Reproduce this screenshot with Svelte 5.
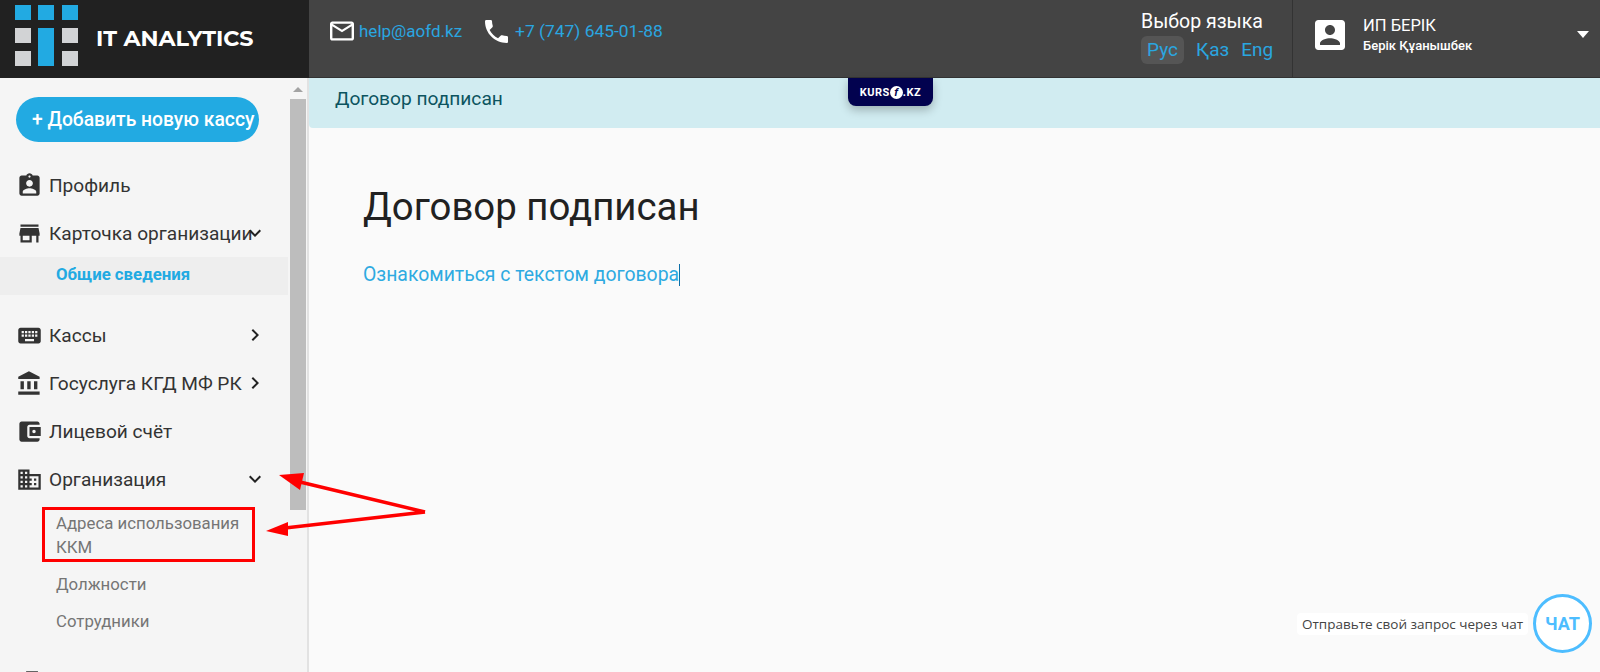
<script lang="ts">
    const icons = {
        profile: 'M19 3h-4.18C14.4 1.84 13.3 1 12 1c-1.3 0-2.4.84-2.82 2H5c-1.1 0-2 .9-2 2v14c0 1.1.9 2 2 2h14c1.1 0 2-.9 2-2V5c0-1.1-.9-2-2-2zm-7 0c.55 0 1 .45 1 1s-.45 1-1 1-1-.45-1-1 .45-1 1-1zm0 4c1.66 0 3 1.34 3 3s-1.34 3-3 3-3-1.34-3-3 1.34-3 3-3zm6 12H6v-1.4c0-2 4-3.1 6-3.1s6 1.1 6 3.1V19z',
        store: 'M20 4H4v2h16V4zm1 10v-2l-1-5H4l-1 5v2h1v6h10v-6h4v6h2v-6h1zm-9 4H6v-4h6v4z',
        keyboard: 'M20 5H4c-1.1 0-1.99.9-1.99 2L2 17c0 1.1.9 2 2 2h16c1.1 0 2-.9 2-2V7c0-1.1-.9-2-2-2zm-9 3h2v2h-2V8zm0 3h2v2h-2v-2zM8 8h2v2H8V8zm0 3h2v2H8v-2zm-1 2H5v-2h2v2zm0-3H5V8h2v2zm9 7H8v-2h8v2zm0-4h-2v-2h2v2zm0-3h-2V8h2v2zm3 3h-2v-2h2v2zm0-3h-2V8h2v2z',
        bank: 'M4 10v7h3v-7H4zm6 0v7h3v-7h-3zM2 22h19v-3H2v3zm14-12v7h3v-7h-3zm-4.5-9L2 6v2h19V6l-9.5-5z',
        wallet: 'M21 18v1c0 1.1-.9 2-2 2H5c-1.11 0-2-.9-2-2V5c0-1.1.89-2 2-2h14c1.1 0 2 .9 2 2v1h-9c-1.11 0-2 .9-2 2v8c0 1.1.89 2 2 2h9zm-9-2h10V8H12v8zm4-2.5c-.83 0-1.5-.67-1.5-1.5s.67-1.5 1.5-1.5 1.5.67 1.5 1.5-.67 1.5-1.5 1.5z',
        business: 'M12 7V3H2v18h20V7H12zM6 19H4v-2h2v2zm0-4H4v-2h2v2zm0-4H4V9h2v2zm0-4H4V5h2v2zm4 12H8v-2h2v2zm0-4H8v-2h2v2zm0-4H8V9h2v2zm0-4H8V5h2v2zm10 12h-8v-2h2v-2h-2v-2h2v-2h-2V9h8v10zm-2-8h-2v2h2v-2zm0 4h-2v2h2v-2z',
        doc: 'M9 2h10.5v20H9z'
    };
    const chevronRight = 'M10 6L8.59 7.41 13.17 12l-4.58 4.59L10 18l6-6z';
    const chevronDown = 'M16.59 8.59L12 13.17 7.41 8.59 6 10l6 6 6-6z';

    const nav = [
        { label: 'Профиль', icon: icons.profile },
        {
            label: 'Карточка организации',
            icon: icons.store,
            open: true,
            active: true,
            children: ['Общие сведения']
        },
        { label: 'Кассы', icon: icons.keyboard, arrow: true },
        { label: 'Госуслуга КГД МФ РК', icon: icons.bank, arrow: true },
        { label: 'Лицевой счёт', icon: icons.wallet },
        {
            label: 'Организация',
            icon: icons.business,
            open: true,
            children: ['Адреса использования ККМ', 'Должности', 'Сотрудники']
        },
        { label: '', icon: icons.doc }
    ];

    const squares = [
        [0, 0, '#22aae2'], [23, 0, '#22aae2'], [47, 0, '#22aae2'],
        [0, 23, '#d2d3d5'], [47, 23, '#d2d3d5'],
        [0, 46, '#d2d3d5'], [47, 46, '#d2d3d5']
    ];
</script>

<div class="page">
    <header>
        <div class="brand">
            <svg width="63" height="61" viewBox="0 0 63 61">
                {#each squares as s}
                    <rect x={s[0]} y={s[1]} width="16" height="15" fill={s[2]} />
                {/each}
                <rect x="23" y="23" width="16" height="38" fill="#22aae2" />
            </svg>
            <span>IT ANALYTICS</span>
        </div>
        <div class="topbar">
            <div class="contacts">
                <svg class="contact-icon" viewBox="2 4 20 16" width="24" height="20">
                    <path fill="#fff" d="M22 6c0-1.1-.9-2-2-2H4c-1.1 0-2 .9-2 2v12c0 1.1.9 2 2 2h16c1.1 0 2-.9 2-2V6zm-2 0l-8 5-8-5h16zm0 12H4V8l8 5 8-5v10z" />
                </svg>
                <a class="contact mail" href="#mail">help@aofd.kz</a>
                <svg class="contact-icon" viewBox="3 3 18 18" width="23" height="23">
                    <path fill="#fff" d="M6.62 10.79c1.44 2.83 3.76 5.14 6.59 6.59l2.2-2.2c.27-.27.67-.36 1.02-.24 1.12.37 2.33.57 3.57.57.55 0 1 .45 1 1V20c0 .55-.45 1-1 1-9.39 0-17-7.61-17-17 0-.55.45-1 1-1h3.5c.55 0 1 .45 1 1 0 1.25.2 2.45.57 3.57.11.35.03.74-.25 1.02l-2.2 2.2z" />
                </svg>
                <a class="contact tel" href="#tel">+7 (747) 645-01-88</a>
            </div>

            <div class="lang">
                <div class="lang-title">Выбор языка</div>
                <div class="lang-list">
                    <a class="current" href="#ru">Рус</a>
                    <a href="#kz">Қаз</a>
                    <a href="#en">Eng</a>
                </div>
            </div>

            <div class="user">
                <svg viewBox="3 3 18 18" width="30" height="30">
                    <path fill="#fff" d="M3 5v14c0 1.1.89 2 2 2h14c1.1 0 2-.9 2-2V5c0-1.1-.9-2-2-2H5c-1.11 0-2 .9-2 2zm12 4c0 1.66-1.34 3-3 3s-3-1.34-3-3 1.34-3 3-3 3 1.34 3 3zm-9 8c0-2 4-3.1 6-3.1s6 1.1 6 3.1v1H6v-1z" />
                </svg>
                <div class="user-text">
                    <div class="user-org">ИП БЕРІК</div>
                    <div class="user-name">Берік Құанышбек</div>
                </div>
                <span class="caret"></span>
            </div>
        </div>
    </header>

    <div class="body">
        <aside>
            <div class="side-scroll">
                <button class="add">+ Добавить новую кассу</button>
                <nav>
                    {#each nav as item}
                        <div class="row">
                            <svg class="row-icon" viewBox="0 0 24 24" width="27" height="27">
                                <path fill="#333" d={item.icon} />
                            </svg>
                            <span>{item.label}</span>
                            {#if item.open || item.arrow}
                                <svg class="chevron" viewBox="0 0 24 24" width="24" height="24">
                                    <path fill="#222" d={item.open ? chevronDown : chevronRight} />
                                </svg>
                            {/if}
                        </div>
                        {#if item.children}
                            <div class="sub" class:active={item.active}>
                                {#each item.children as child}
                                    <a href="#sub">{child}</a>
                                {/each}
                            </div>
                        {/if}
                    {/each}
                </nav>
            </div>
            <div class="scrollbar">
                <span class="scroll-up"></span>
                <span class="thumb"></span>
            </div>
        </aside>

        <main>
            <div class="alert">Договор подписан</div>
            <div class="badge">KURS<i>f</i>.KZ</div>
            <section>
                <h1>Договор подписан</h1>
                <p><a href="#doc">Ознакомиться с текстом договора</a><span class="cursor"></span></p>
            </section>
            <div class="chat">
                <span class="chat-text">Отправьте свой запрос через чат</span>
                <span class="chat-btn">ЧАТ</span>
            </div>
        </main>
    </div>

    <!-- annotations drawn on top of the screenshot -->
    <div class="mark"></div>
    <svg class="arrows" width="450" height="100" viewBox="0 0 450 100">
        <path d="M425 52 L300 22 M425 52 L285 68" fill="none" stroke="#f00" stroke-width="3.5" />
        <polygon points="279,15 304,13 300,30" fill="#f00" />
        <polygon points="266,71 288,62 288,76" fill="#f00" />
    </svg>
</div>

<style>
    :global(body) {
        margin: 0;
        font-family: Roboto, 'Liberation Sans', sans-serif;
    }

    a {
        text-decoration: none;
    }

    .page {
        position: relative;
        display: flex;
        flex-direction: column;
        height: 672px;
        overflow: hidden;
    }

    header {
        display: flex;
        flex: 0 0 78px;
        height: 78px;
    }

    .brand {
        display: flex;
        align-items: flex-start;
        gap: 18px;
        box-sizing: border-box;
        width: 309px;
        padding: 5px 0 0 15px;
        background: #212121;
    }

    .brand span {
        margin-top: 20px;
        font-family: Montserrat, Inter, sans-serif;
        font-size: 22.3px;
        line-height: 26px;
        font-weight: 700;
        color: #fff;
        white-space: nowrap;
    }

    .topbar {
        display: flex;
        align-items: center;
        flex: 1;
        padding-left: 21px;
        background: #444;
        border-bottom: 1px solid #333;
    }

    .contacts {
        display: flex;
        align-items: center;
        margin-bottom: 15px;
    }

    .contact-icon {
        flex: none;
    }

    .contact {
        margin-left: 7px;
        font-size: 17px;
        color: #2aa6e0;
    }

    .mail {
        margin-left: 5px;
        margin-right: 23px;
    }

    .tel {
        font-size: 17.4px;
    }

    .lang {
        margin-left: auto;
        width: 151px;
        padding-bottom: 3px;
    }

    .lang-title {
        font-size: 19.5px;
        line-height: 24px;
        color: #fff;
    }

    .lang-list {
        display: flex;
        gap: 12px;
        margin-top: 2px;
        font-size: 19px;
        line-height: 28px;
    }

    .lang-list a {
        color: #2aa6e0;
    }

    .lang-list .current {
        padding: 0 6px;
        border-radius: 6px;
        background: #555;
    }

    .user {
        display: flex;
        align-items: center;
        gap: 18px;
        box-sizing: border-box;
        width: 308px;
        height: 100%;
        padding: 0 11px 8px 22px;
        border-left: 1px solid #333;
    }

    .user-text {
        flex: 1;
        color: #fff;
    }

    .user-org {
        font-size: 16.5px;
        line-height: 20px;
    }

    .user-name {
        margin-top: 2px;
        font-size: 13px;
        line-height: 16px;
        font-weight: 500;
    }

    .caret {
        border-top: 7px solid #fff;
        border-left: 6px solid transparent;
        border-right: 6px solid transparent;
    }

    .body {
        display: flex;
        flex: 1;
        min-height: 0;
    }

    aside {
        display: flex;
        flex: 0 0 309px;
        box-sizing: border-box;
        background: #f5f5f5;
        border-right: 2px solid #e2e2e2;
    }

    .side-scroll {
        flex: 1;
        min-width: 0;
        overflow: hidden;
    }

    .add {
        display: block;
        width: 243px;
        height: 45px;
        margin: 19px 0 19px 16px;
        padding: 0 0 0 16px;
        border: 0;
        border-radius: 23px;
        background: #22aae2;
        color: #fff;
        font-family: inherit;
        font-size: 19.3px;
        font-weight: 500;
        text-align: left;
        white-space: nowrap;
    }

    .row {
        position: relative;
        display: flex;
        align-items: center;
        gap: 6px;
        height: 48px;
        padding-left: 16px;
        font-size: 19.1px;
        color: #333;
        white-space: nowrap;
    }

    .chevron {
        position: absolute;
        right: 21px;
        top: 12px;
    }

    .sub {
        margin-bottom: 18px;
        padding-top: 2px;
    }

    .sub.active {
        margin-bottom: 16px;
        padding-top: 0;
        background: #eee;
    }

    .sub a {
        display: block;
        padding: 6px 34px 7px 56px;
        font-size: 16.8px;
        line-height: 24px;
        color: #757575;
    }

    .sub.active a {
        padding-top: 5px;
        padding-bottom: 9px;
        font-weight: 700;
        color: #22aae2;
    }

    .scrollbar {
        display: flex;
        flex-direction: column;
        align-items: center;
        flex: 0 0 19px;
    }

    .scroll-up {
        margin-top: 9px;
        border-bottom: 5px solid #a3a3a3;
        border-left: 5px solid transparent;
        border-right: 5px solid transparent;
    }

    .thumb {
        width: 16px;
        height: 411px;
        margin-top: 7px;
        background: #bdbdbd;
    }

    main {
        position: relative;
        flex: 1;
        background: #fafafa;
    }

    .alert {
        box-sizing: border-box;
        height: 50px;
        padding: 9px 0 0 26px;
        border-bottom-left-radius: 4px;
        background: #d1ecf1;
        color: #0c5460;
        font-size: 19.15px;
        line-height: 24px;
    }

    .badge {
        position: absolute;
        top: 0;
        left: 539px;
        display: flex;
        align-items: center;
        justify-content: center;
        width: 85px;
        height: 28px;
        border-radius: 0 0 8px 8px;
        background: #02024f;
        box-shadow: 0 4px 10px rgba(0, 0, 0, 0.25);
        color: #fff;
        font-size: 11px;
        font-weight: 700;
        letter-spacing: 0.5px;
    }

    .badge i {
        display: inline-block;
        width: 13px;
        height: 13px;
        border-radius: 50%;
        background: #fff;
        color: #02024f;
        font-size: 11px;
        line-height: 13px;
        text-align: center;
    }

    section {
        padding: 54px 0 0 54px;
    }

    h1 {
        margin: 0;
        font-size: 38.4px;
        line-height: 50px;
        font-weight: 400;
        color: #212121;
    }

    p {
        margin: 31px 0 0;
        font-size: 19.4px;
        line-height: 24px;
    }

    p a {
        color: #2eaae1;
    }

    .cursor {
        display: inline-block;
        width: 1px;
        height: 22px;
        vertical-align: -5px;
        background: #0c6fa8;
    }

    .chat {
        position: absolute;
        right: 8px;
        bottom: 19px;
        display: flex;
        align-items: center;
        gap: 5px;
    }

    .chat-text {
        padding: 2px 5px;
        border-radius: 4px;
        background: #fff;
        font-family: 'Open Sans', sans-serif;
        font-size: 13.5px;
        line-height: 18px;
        color: #444;
    }

    .chat-btn {
        display: flex;
        align-items: center;
        justify-content: center;
        box-sizing: border-box;
        width: 59px;
        height: 59px;
        border: 3px solid #4dbdff;
        border-radius: 50%;
        background: #fff;
        color: #4dbdff;
        font-size: 18px;
        font-weight: 700;
    }

    .mark {
        position: absolute;
        left: 42px;
        top: 507px;
        width: 213px;
        height: 55px;
        box-sizing: border-box;
        border: 3px solid #f00;
    }

    .arrows {
        position: absolute;
        left: 0;
        top: 460px;
    }
</style>
